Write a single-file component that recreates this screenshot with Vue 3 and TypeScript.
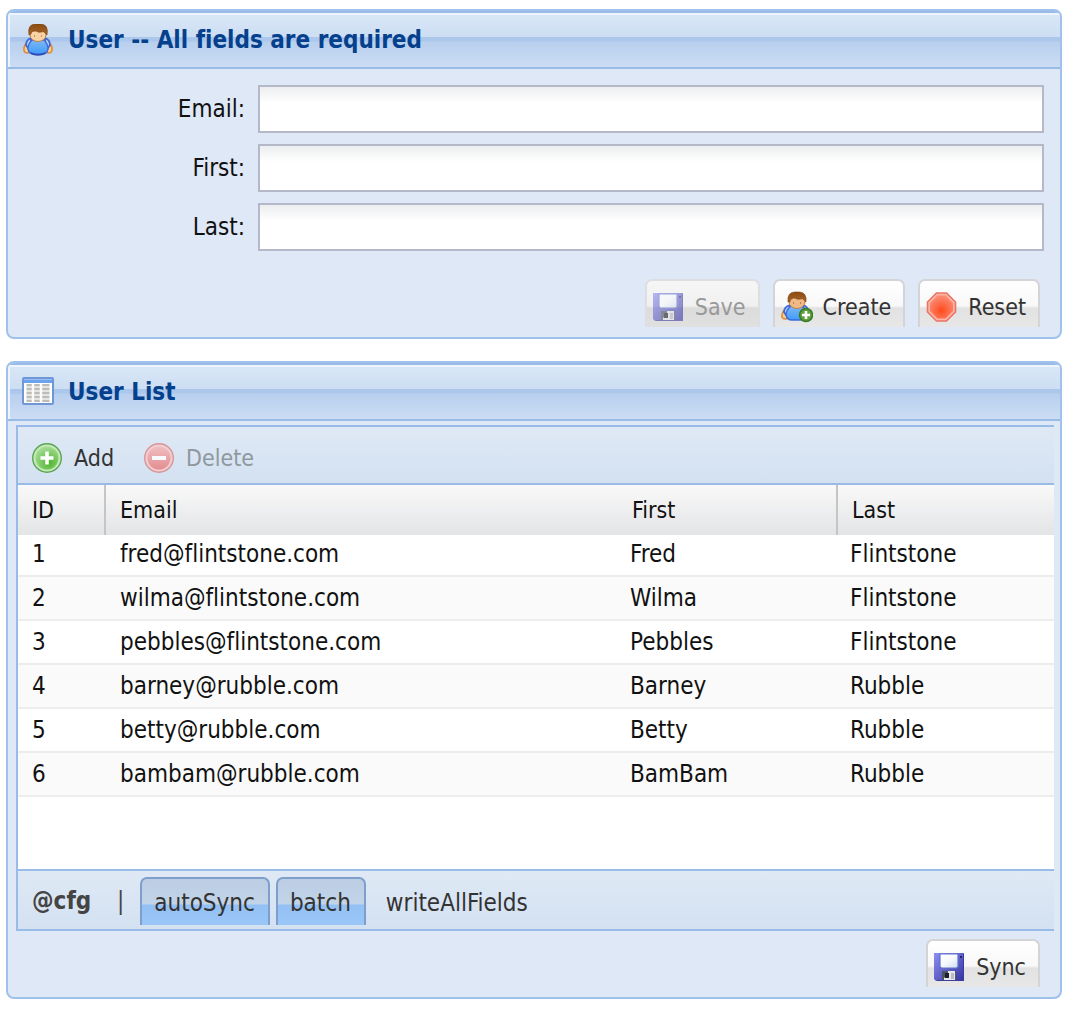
<script setup lang="ts">
import { ref } from 'vue'

interface User {
  id: number
  email: string
  first: string
  last: string
}

interface Field {
  name: string
  label: string
}

const fields: Field[] = [
  { name: 'email', label: 'Email:' },
  { name: 'first', label: 'First:' },
  { name: 'last', label: 'Last:' },
]

const form = ref<Record<string, string>>({ email: '', first: '', last: '' })

const users = ref<User[]>([
  { id: 1, email: 'fred@flintstone.com', first: 'Fred', last: 'Flintstone' },
  { id: 2, email: 'wilma@flintstone.com', first: 'Wilma', last: 'Flintstone' },
  { id: 3, email: 'pebbles@flintstone.com', first: 'Pebbles', last: 'Flintstone' },
  { id: 4, email: 'barney@rubble.com', first: 'Barney', last: 'Rubble' },
  { id: 5, email: 'betty@rubble.com', first: 'Betty', last: 'Rubble' },
  { id: 6, email: 'bambam@rubble.com', first: 'BamBam', last: 'Rubble' },
])

const options = ref([
  { name: 'autoSync', on: true },
  { name: 'batch', on: true },
  { name: 'writeAllFields', on: false },
])

function reset(): void {
  form.value = { email: '', first: '', last: '' }
}

function create(): void {
  const { email, first, last } = form.value
  if (!email || !first || !last) return
  users.value.push({ id: users.value.length + 1, email, first, last })
  reset()
}
</script>

<template>
  <svg class="defs" aria-hidden="true">
    <defs>
      <linearGradient id="shirt" x1="0" y1="0" x2="0" y2="1">
        <stop offset="0" stop-color="#7fb8f8" />
        <stop offset="1" stop-color="#3f9bf8" />
      </linearGradient>
      <linearGradient id="hair" x1="0" y1="0" x2="0" y2="1">
        <stop offset="0" stop-color="#8a4a10" />
        <stop offset="1" stop-color="#a8672c" />
      </linearGradient>
      <linearGradient id="disk-body" x1="0" y1="0" x2="1" y2="1">
        <stop offset="0" stop-color="#8d8df2" />
        <stop offset="1" stop-color="#3434a0" />
      </linearGradient>
      <linearGradient id="disk-label" x1="0" y1="0" x2="1" y2="1">
        <stop offset="0" stop-color="#ffffff" />
        <stop offset="0.5" stop-color="#f6f9ff" />
        <stop offset="1" stop-color="#cfdcf2" />
      </linearGradient>
      <radialGradient id="stop-fill" cx="0.5" cy="0.65" r="0.6">
        <stop offset="0" stop-color="#ff4a1c" />
        <stop offset="1" stop-color="#fb8a72" />
      </radialGradient>
      <radialGradient id="add-fill" cx="0.6" cy="0.7" r="0.7">
        <stop offset="0" stop-color="#4fb52c" />
        <stop offset="1" stop-color="#a5dc95" />
      </radialGradient>
      <linearGradient id="del-fill" x1="0" y1="0" x2="0" y2="1">
        <stop offset="0" stop-color="#f5b5b5" />
        <stop offset="1" stop-color="#e87878" />
      </linearGradient>
      <symbol id="i-user" viewBox="0 0 32 32">
        <path d="M7 17 Q3 19 2 24 Q1 29 6 29 L9 26 Z M25 17 Q29 19 30 24 Q31 29 26 29 L23 26 Z" fill="#f8cc90" stroke="#dd8c30" stroke-width="1.6" />
        <path d="M9 14 Q4 16 4 21 L6 24 L9 23 Z M23 14 Q28 16 28 21 L26 24 L23 23 Z" fill="#b9d4fa" stroke="#3f66d4" stroke-width="1.8" />
        <path d="M10 16 Q6 20 6 25 Q7 30 12 30 H20 Q25 30 26 25 Q26 20 22 16 Z" fill="url(#shirt)" stroke="#3a6bdc" stroke-width="1.4" />
        <path d="M9 29 Q12 31 16 31 Q20 31 23 29" fill="none" stroke="#2c46b4" stroke-width="1.6" />
        <ellipse cx="16" cy="11" rx="8" ry="6.500" fill="#f9d3a4" stroke="#bd8146" />
        <path d="M12 12 H13 M19 12 H20" stroke="#b08058" stroke-width="1.4" />
        <path d="M7 11 Q5 0 14 0 H18 Q27 0 25 11 L23 9 Q22 7 19 8 Q17 9 14 7 Q9 7 9 10 Z" fill="url(#hair)" stroke="#7c3f0c" stroke-width="0.6" />
      </symbol>
      <symbol id="i-user-add" viewBox="0 0 32 32">
        <path d="M6 17 Q2 19 1 24 Q0 28 5 28 L8 26 Z" fill="#f8cc90" stroke="#dd8c30" stroke-width="1.6" />
        <path d="M9 14 Q3 16 3 21 L5 24 L8 23 Z M22 14 Q26 15 27 19 L24 22 Z" fill="#b9d4fa" stroke="#3f66d4" stroke-width="1.8" />
        <path d="M10 15 Q5 19 5 24 Q6 29 11 29 H20 L25 20 L21 15 Z" fill="url(#shirt)" stroke="#3a6bdc" stroke-width="1.4" />
        <ellipse cx="16" cy="11" rx="8" ry="6.500" fill="#f0b986" stroke="#bd8146" />
        <path d="M12 12 H13 M19 12 H20" stroke="#a87048" stroke-width="1.4" />
        <path d="M7 11 Q6 1 14 1 H18 Q26 1 25 11 L23 9 Q22 7 19 8 Q17 9 14 7 Q9 7 9 11 Z" fill="url(#hair)" stroke="#7c3f0c" stroke-width="0.6" />
        <circle cx="25" cy="24" r="6.500" fill="#5fa13c" stroke="#3b7a24" stroke-width="1.500" />
        <path d="M25 20 V28 M21 24 H29" stroke="#fff" stroke-width="2.600" />
      </symbol>
      <symbol id="i-disk" viewBox="0 0 32 32">
        <path d="M0 2 H30 V30 H2 L0 28 Z" fill="url(#disk-body)" />
        <path d="M29.500 3 V29.500 H3" fill="none" stroke="#3c3c9c" stroke-width="1" />
        <path d="M6 3 H24 V15 Q24 17 22 17 H8 Q6 17 6 15 Z" fill="url(#disk-label)" stroke="#6474cc" stroke-width="1.2" />
        <rect x="26" y="5" width="2" height="2" fill="#26266e" />
        <rect x="8" y="20" width="14" height="9" fill="#4c5361" />
        <path d="M14 20 H21 V29 H10 V27 L14 24 Z" fill="#e6e8ee" />
        <rect x="11" y="22" width="4" height="5" fill="#1d2026" />
        <rect x="17" y="22" width="3" height="6" fill="#b8bcc6" />
      </symbol>
      <symbol id="i-stop" viewBox="0 0 32 32">
        <path d="M10.500 2 H20.500 L29.500 11 V21 L20.500 30 H10.500 L1.500 21 V11 Z" fill="#fbb5a6" stroke="#ea7564" stroke-width="1.6" />
        <path d="M11.500 4.500 H19.500 L27 12 V20 L19.500 27.500 H11.500 L4 20 V12 Z" fill="url(#stop-fill)" />
      </symbol>
      <symbol id="i-table" viewBox="0 0 32 32">
        <rect x="1" y="2" width="30" height="26" rx="1" fill="#fff" stroke="#6f97d6" stroke-width="2" />
        <rect x="2" y="3" width="28" height="4" fill="#6aa2ee" />
        <path d="M2 3.500 H30" stroke="#98c0f4" stroke-width="1" />
        <rect x="3" y="8" width="26" height="18" fill="#e4e4e2" />
        <path d="M4 9 H28 M4 13 H28 M4 17 H28 M4 21 H28 M4 25 H28" stroke="#bdbcb8" stroke-width="2" />
        <path d="M11 8 V26 M19 8 V26" stroke="#fbfbfb" stroke-width="2.500" />
        <path d="M3.500 8 V26 M28.500 8 V26" stroke="#fff" stroke-width="2" />
      </symbol>
      <symbol id="i-add" viewBox="0 0 32 32">
        <circle cx="15" cy="16" r="14.300" fill="#c5e8bb" stroke="#5aa650" stroke-width="1.4" />
        <circle cx="15" cy="16" r="11.500" fill="url(#add-fill)" />
        <path d="M15 9.500 V22.500 M8.500 16 H21.500" stroke="#fff" stroke-width="3.600" />
      </symbol>
      <symbol id="i-delete" viewBox="0 0 32 32">
        <circle cx="15" cy="16" r="14.300" fill="#f5caca" stroke="#d98080" stroke-width="1.4" />
        <circle cx="15" cy="16" r="11.500" fill="url(#del-fill)" />
        <path d="M8 16 H22" stroke="#fff" stroke-width="4" />
      </symbol>
    </defs>
  </svg>

  <main class="page">
    <form class="panel" @submit.prevent="create">
      <h2 class="title"><svg class="icon"><use href="#i-user" /></svg>User -- All fields are required</h2>
      <div class="fields">
        <div v-for="f in fields" :key="f.name" class="field">
          <label :for="f.name">{{ f.label }}</label>
          <input :id="f.name" v-model="form[f.name]" type="text" />
        </div>
      </div>
      <div class="actions">
        <button class="btn" type="button" disabled><svg class="icon"><use href="#i-disk" /></svg>Save</button>
        <button class="btn" type="submit"><svg class="icon"><use href="#i-user-add" /></svg>Create</button>
        <button class="btn" type="button" @click="reset"><svg class="icon"><use href="#i-stop" /></svg>Reset</button>
      </div>
    </form>

    <section class="panel">
      <h2 class="title"><svg class="icon"><use href="#i-table" /></svg>User List</h2>
      <div class="grid">
        <div class="toolbar top">
          <button class="tool" type="button"><svg class="icon"><use href="#i-add" /></svg>Add</button>
          <button class="tool" type="button" disabled><svg class="icon"><use href="#i-delete" /></svg>Delete</button>
        </div>
        <div class="body">
          <table>
            <colgroup>
              <col class="c-id" />
              <col class="c-email" />
              <col class="c-first" />
              <col class="c-last" />
            </colgroup>
            <thead>
              <tr>
                <th scope="col" class="ruled">ID</th>
                <th scope="col">Email</th>
                <th scope="col" class="pad">First</th>
                <th scope="col" class="split">Last</th>
              </tr>
            </thead>
            <tbody>
              <tr v-for="u in users" :key="u.id">
                <td>{{ u.id }}</td>
                <td>{{ u.email }}</td>
                <td>{{ u.first }}</td>
                <td>{{ u.last }}</td>
              </tr>
            </tbody>
          </table>
        </div>
        <div class="toolbar bottom">
          <strong>@cfg</strong>
          <span class="bar">|</span>
          <button
            v-for="o in options"
            :key="o.name"
            class="toggle"
            :class="{ on: o.on }"
            type="button"
            :aria-pressed="o.on"
            @click="o.on = !o.on"
          >{{ o.name }}</button>
        </div>
      </div>
      <div class="actions">
        <button class="btn" type="button"><svg class="icon"><use href="#i-disk" /></svg>Sync</button>
      </div>
    </section>
  </main>
</template>

<style>
body {
  margin: 0;
  background: #fff;
}
</style>

<style scoped>
.defs {
  position: absolute;
  width: 0;
  height: 0;
}

.page {
  display: flex;
  flex-direction: column;
  gap: 22px;
  padding: 9px 9px 12px 6px;
  font-family: Tahoma, 'DejaVu Sans Condensed', 'DejaVu Sans', sans-serif;
  font-size: 24px;
  line-height: 28px;
  font-variant-ligatures: none;
  color: #111;
}

.icon {
  flex: none;
  width: 32px;
  height: 32px;
}

.panel {
  box-sizing: border-box;
  border: 2px solid #a0c1ec;
  border-radius: 8px;
  background: #dfe8f6;
  overflow: hidden;
}

.title {
  display: flex;
  align-items: center;
  gap: 14px;
  box-sizing: border-box;
  height: 58px;
  margin: 0;
  padding: 0 14px;
  border-top: 2px solid #99bbe8;
  border-bottom: 2px solid #99bbe8;
  box-shadow: inset 2px 2px 0 #eef4fc;
  background: linear-gradient(#dae7f6 0, #cddef3 24px, #abc7ec 24px, #abc7ec 28px, #b8cfee 29px, #cbddf3 100%);
  font-size: 24px;
  line-height: 28px;
  color: #04408c;
}

.fields {
  display: flex;
  flex-direction: column;
  gap: 11px;
  padding: 16px;
}

.field {
  display: flex;
  align-items: center;
  gap: 13px;
}

.field label {
  width: 221px;
  text-align: right;
}

.field input {
  flex: 1;
  box-sizing: border-box;
  min-width: 0;
  height: 48px;
  padding: 0 8px;
  border: 2px solid #b5b8c8;
  border-radius: 0;
  background: linear-gradient(#eceeef 0, #fff 16px);
  font: inherit;
  color: inherit;
  outline: none;
}

.actions {
  display: flex;
  justify-content: flex-end;
  gap: 13px;
  padding: 12px 20px 10px;
}

.grid + .actions {
  padding-top: 8px;
}

button {
  display: flex;
  align-items: center;
  box-sizing: border-box;
  font: inherit;
  font-size: 23px;
  color: #333;
}

.btn {
  gap: 10px;
  height: 48px;
  padding: 6px 12px 0 6px;
  border: 2px solid #d4d4d6;
  border-bottom: 0;
  border-radius: 7px 7px 0 0;
  background: linear-gradient(#fff 0, #f8f8f8 25px, #e2e2e2 27px, #e7e7e7 100%);
}

.btn:disabled {
  border-color: #dcdee2;
  background: linear-gradient(#f6f6f6 0, #f0f0f1 25px, #dcdcdc 27px, #e0e0e0 100%);
  color: #999;
}

.btn:disabled .icon {
  opacity: 0.6;
}

.grid {
  margin: 4px 6px 0 8px;
  border-left: 2px solid #99bbe8;
}

.toolbar {
  display: flex;
  align-items: center;
  box-sizing: border-box;
  background: linear-gradient(#dfe9f5, #d3e1f1);
}

.top {
  gap: 30px;
  height: 60px;
  padding: 6px 14px 0;
  border-top: 2px solid #99bbe8;
  border-bottom: 2px solid #99bbe8;
}

.tool {
  gap: 10px;
  padding: 0;
  border: 0;
  background: none;
}

.tool:disabled {
  color: #8f989f;
}

.tool:disabled .icon {
  opacity: 0.8;
}

.body {
  box-sizing: border-box;
  min-height: 384px;
  background: #fff;
}

table {
  width: 100%;
  table-layout: fixed;
  border-collapse: separate;
  border-spacing: 0;
}

.c-id {
  width: 88px;
}

.c-email {
  width: 510px;
}

.c-first {
  width: 220px;
}

thead tr {
  background: linear-gradient(#f9f9f9, #e3e4e6);
}

th,
td {
  box-sizing: border-box;
  padding: 0 14px;
  text-align: left;
  font-weight: normal;
}

th {
  height: 50px;
  font-size: 23px;
}

th.ruled {
  border-right: 2px solid #c5c5c5;
}

th.pad {
  padding-left: 16px;
}

th.split {
  border-left: 2px solid #c5c5c5;
}

td {
  height: 44px;
  border-bottom: 2px solid #ededed;
}

tbody tr:first-child td {
  height: 42px;
  padding-bottom: 2px;
}

tbody tr:nth-child(even) {
  background: #fafafa;
}

.bottom {
  height: 62px;
  padding: 2px 14px 0;
  border-top: 2px solid #99bbe8;
  border-bottom: 2px solid #99bbe8;
}

.bottom strong {
  color: #444;
}

.bar {
  box-sizing: border-box;
  width: 49px;
  padding-left: 10px;
  text-align: center;
  color: #444;
}

.toggle {
  height: 48px;
  margin-right: 6px;
  padding: 2px 13px 0 12px;
  border: 2px solid transparent;
  border-bottom: 0;
  border-radius: 7px 7px 0 0;
  background: none;
  font-size: 24px;
}

.toggle.on {
  border-color: #7e9fcc;
  background: linear-gradient(#bccde4 0, #c1d4e8 25px, #94c1f5 26px, #9ac6f8 100%);
}
</style>
